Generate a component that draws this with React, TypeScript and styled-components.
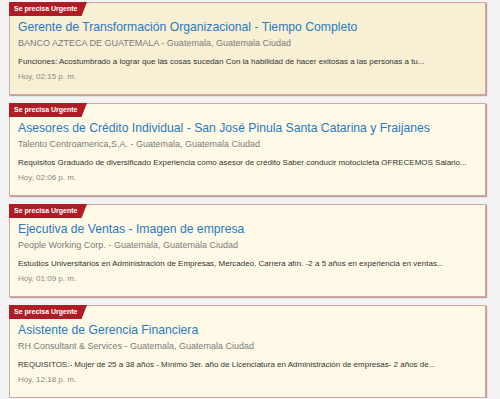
import React from "react";
import styled, { createGlobalStyle } from "styled-components";

const Global = createGlobalStyle`
  html, body { margin: 0; padding: 0; background: #f4f3f4; }
  body { font-family: "Liberation Sans", Arial, Helvetica, sans-serif; }
`;

const List = styled.div`
  display: flex;
  flex-direction: column;
  gap: 8px;
  padding: 2px 14px 0 9px;
`;

const Card = styled.div<{ $active?: boolean }>`
  position: relative;
  background: ${(p) => (p.$active ? "#f8f0d4" : "#fffae7")};
  border: 1px solid #d6a6a3;
  box-shadow: 1px 1px 1px rgba(150, 90, 85, 0.55);
  padding: 15px 10px 10px 8px;
  display: flex;
  flex-direction: column;
`;

const Badge = styled.div`
  position: absolute;
  top: -1px;
  left: -1px;
  height: 14px;
  width: 78px;
  background: #ae1d26;
  color: #fff;
  font-size: 7px;
  font-weight: bold;
  line-height: 14px;
  padding-left: 5px;
  box-sizing: border-box;
  white-space: nowrap;
  clip-path: polygon(0 0, 100% 0, 93% 100%, 0 100%);
`;

const Title = styled.div`
  font-size: 12.2px;
  line-height: 18px;
  color: #2a79c1;
  white-space: nowrap;
`;

const Company = styled.div`
  font-size: 9px;
  line-height: 14px;
  color: #7a7a7a;
`;

const Desc = styled.div`
  font-size: 8px;
  line-height: 14px;
  color: #333;
  margin-top: 5px;
  white-space: nowrap;
`;

const DateLine = styled.div`
  font-size: 8px;
  line-height: 14px;
  color: #888;
  margin-top: 1px;
`;

const jobs = [
  {
    title: "Gerente de Transformación Organizacional - Tiempo Completo",
    company: "BANCO AZTECA DE GUATEMALA - Guatemala, Guatemala Ciudad",
    desc: "Funciones: Acostumbrado a lograr que las cosas sucedan Con la habilidad de hacer exitosas a las personas a tu...",
    date: "Hoy, 02:15 p. m.",
    active: true,
  },
  {
    title: "Asesores de Crédito Individual - San José Pinula Santa Catarina y Fraijanes",
    company: "Talento Centroamerica,S,A. - Guatemala, Guatemala Ciudad",
    desc: "Requisitos Graduado de diversificado Experiencia como asesor de crédito Saber conducir motocicleta OFRECEMOS Salario...",
    date: "Hoy, 02:06 p. m.",
  },
  {
    title: "Ejecutiva de Ventas - Imagen de empresa",
    company: "People Working Corp. - Guatemala, Guatemala Ciudad",
    desc: "Estudios Universitarios en Administración de Empresas, Mercadeo, Carrera afín. -2 a 5 años en experiencia en ventas...",
    date: "Hoy, 01:09 p. m.",
  },
  {
    title: "Asistente de Gerencia Financiera",
    company: "RH Consultant & Services - Guatemala, Guatemala Ciudad",
    desc: "REQUISITOS:- Mujer de 25 a 38 años - Mínimo 3er. año de Licenciatura en Administración de empresas- 2 años de...",
    date: "Hoy, 12:18 p. m.",
  },
];

export default function App() {
  return (
    <>
      <Global />
      <List>
        {jobs.map((j) => (
          <Card key={j.title} $active={j.active}>
            <Badge>Se precisa Urgente</Badge>
            <Title>{j.title}</Title>
            <Company>{j.company}</Company>
            <Desc>{j.desc}</Desc>
            <DateLine>{j.date}</DateLine>
          </Card>
        ))}
      </List>
    </>
  );
}
